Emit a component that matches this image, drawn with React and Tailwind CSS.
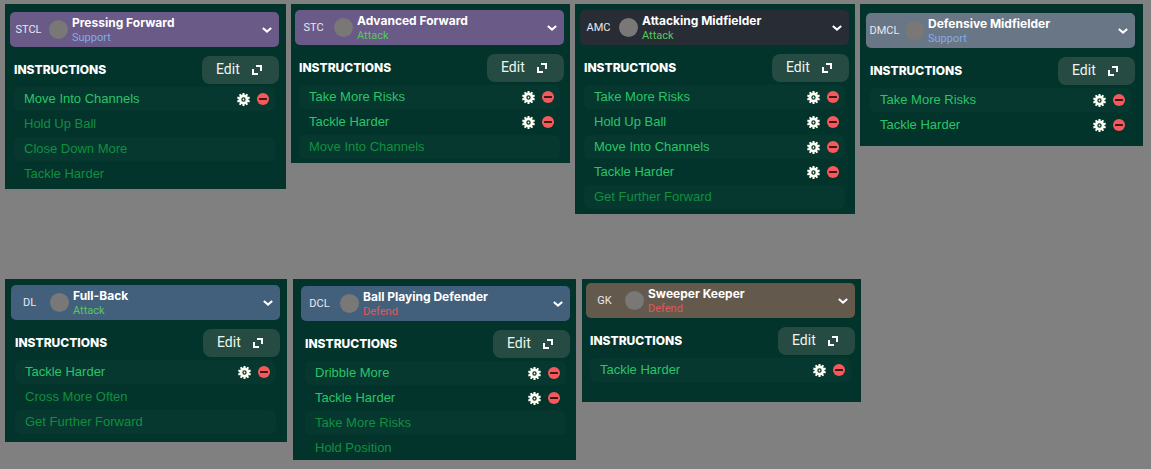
const DUTY_COLORS = {
  Support: 'text-[#82abe8]',
  Attack: 'text-[#5cc65f]',
  Defend: 'text-[#e0575c]',
};

const TOP_ROLES = [
  {
    code: 'STCL', role: 'Pressing Forward', duty: 'Support',
    header: 'bg-[#695a87]', padding: 'pt-2 pl-[5px] pr-[7px] pb-[3px]',
    active: ['Move Into Channels'],
    preset: ['Hold Up Ball', 'Close Down More', 'Tackle Harder'],
  },
  {
    code: 'STC', role: 'Advanced Forward', duty: 'Attack',
    header: 'bg-[#695a87]', padding: 'pt-1.5 pl-1 pr-1.5 pb-1',
    active: ['Take More Risks', 'Tackle Harder'],
    preset: ['Move Into Channels'],
  },
  {
    code: 'AMC', role: 'Attacking Midfielder', duty: 'Attack',
    header: 'bg-[#272c35]', padding: 'pt-1.5 pl-[5px] pr-1.5 pb-[5px]',
    active: ['Take More Risks', 'Hold Up Ball', 'Move Into Channels', 'Tackle Harder'],
    preset: ['Get Further Forward'],
  },
  {
    code: 'DMCL', role: 'Defensive Midfielder', duty: 'Support',
    header: 'bg-[#697685]', padding: 'pt-[9px] pl-1.5 pr-2 pb-[9px]',
    active: ['Take More Risks', 'Tackle Harder'],
    preset: [],
  },
];

const BACK_ROLES = [
  {
    code: 'DL', role: 'Full-Back', duty: 'Attack',
    header: 'bg-[#42607b]', padding: 'pt-1.5 pl-1.5 pr-[7px] pb-2',
    active: ['Tackle Harder'],
    preset: ['Cross More Often', 'Get Further Forward'],
  },
  {
    code: 'DCL', role: 'Ball Playing Defender', duty: 'Defend',
    header: 'bg-[#42607b]', padding: 'pt-[7px] pl-2 pr-1.5',
    active: ['Dribble More', 'Tackle Harder'],
    preset: ['Take More Risks', 'Hold Position'],
  },
  {
    code: 'GK', role: 'Sweeper Keeper', duty: 'Defend',
    header: 'bg-[#63594c]', padding: 'pt-1 pl-1 pr-1.5 pb-5',
    active: ['Tackle Harder'],
    preset: [],
  },
];

const GEAR_TEETH = [0, 36, 72, 108, 144, 180, 216, 252, 288, 324];

function GearIcon() {
  return (
    <svg viewBox="0 0 13 13" className="size-[13px]" aria-hidden="true">
      {GEAR_TEETH.map((angle) => (
        <rect key={angle} x="5.5" y="0" width="2" height="3" fill="#fffff4" transform={`rotate(${angle} 6.5 6.5)`} />
      ))}
      <circle cx="6.5" cy="6.5" r="3.6" fill="none" stroke="#fffff4" strokeWidth="2.8" />
      <circle cx="6.5" cy="6.5" r="0.9" fill="#fffff4" />
    </svg>
  );
}

function RemoveIcon() {
  return (
    <svg viewBox="0 0 12 12" className="size-3" aria-hidden="true">
      <circle cx="6" cy="6" r="6" fill="#f5595c" />
      <rect x="2" y="5" width="8" height="2" rx="0.5" fill="#3d1a1a" />
    </svg>
  );
}

function ExpandIcon() {
  return (
    <svg viewBox="0 0 10 10" className="size-2.5" fill="none" stroke="#fff" strokeWidth="2" aria-hidden="true">
      <path d="M4 1h5v5M1 4v5h5" />
    </svg>
  );
}

function ChevronIcon() {
  return (
    <svg viewBox="0 0 10 6" className="h-1.5 w-2.5" fill="none" stroke="#fff" strokeWidth="2" aria-hidden="true">
      <path d="M0.8 1 5 4.6 9.2 1" />
    </svg>
  );
}

function Instruction({ name, active }) {
  return (
    <li className="flex h-6 items-center rounded-md pr-1.5 pl-2.5 odd:bg-[#06382f]">
      <span className={`flex-1 font-['Liberation_Sans',sans-serif] text-[13px] leading-6 ${active ? 'text-[#29c568]' : 'text-[#118f3f]'}`}>{name}</span>
      {active && (
        <span className="flex items-center gap-[7px]">
          <button type="button" aria-label={`Configure ${name}`}><GearIcon /></button>
          <button type="button" aria-label={`Remove ${name}`}><RemoveIcon /></button>
        </span>
      )}
    </li>
  );
}

function RoleCard({ code, role, duty, header, padding, active, preset }) {
  return (
    <section className={`bg-[#03342b] ${padding}`}>
      <button type="button" aria-haspopup="listbox" className={`flex h-[35px] w-full items-center rounded-[5px] pr-[7px] text-left ${header}`}>
        <span className="w-[37px] pt-0.5 text-center text-[11px] text-[#e8e8ee]">{code}</span>
        <span className="ml-0.5 size-[19px] rounded-full bg-[#7a7876]" />
        <span className="ml-1 flex flex-1 flex-col">
          <span className="font-['Inter',sans-serif] text-[12px] leading-[15px] font-bold text-white">{role}</span>
          <span className={`text-[11px] leading-[15px] ${DUTY_COLORS[duty]}`}>{duty}</span>
        </span>
        <ChevronIcon />
      </button>
      <div className="mt-[9px] flex items-center justify-between pl-1">
        <h2 className="font-['Inter',sans-serif] text-[12px] leading-4 font-extrabold text-white">INSTRUCTIONS</h2>
        <button type="button" className="flex h-7 w-[77px] items-center gap-3 rounded-lg bg-[#254b42] pl-3.5 text-[14px] leading-5 text-[#eef5f0]">
          <span className="pb-[3px]">Edit</span>
          <ExpandIcon />
        </button>
      </div>
      <ul className="mx-1 mt-[3px] flex flex-col gap-px">
        {active.map((name) => <Instruction key={name} name={name} active />)}
        {preset.map((name) => <Instruction key={name} name={name} />)}
      </ul>
    </section>
  );
}

export default function App() {
  return (
    <main className="flex min-h-screen flex-col gap-[65px] bg-[#808080] pt-1 pr-2 pl-[5px] font-['Roboto',sans-serif]">
      <div className="grid grid-cols-[281fr_279fr_280fr_283fr] items-start gap-x-[5px]">
        {TOP_ROLES.map((card) => <RoleCard key={card.code} {...card} />)}
      </div>
      <div className="grid grid-cols-[282fr_283fr_279fr_276fr] items-start gap-x-1.5">
        {BACK_ROLES.map((card) => <RoleCard key={card.code} {...card} />)}
      </div>
    </main>
  );
}
